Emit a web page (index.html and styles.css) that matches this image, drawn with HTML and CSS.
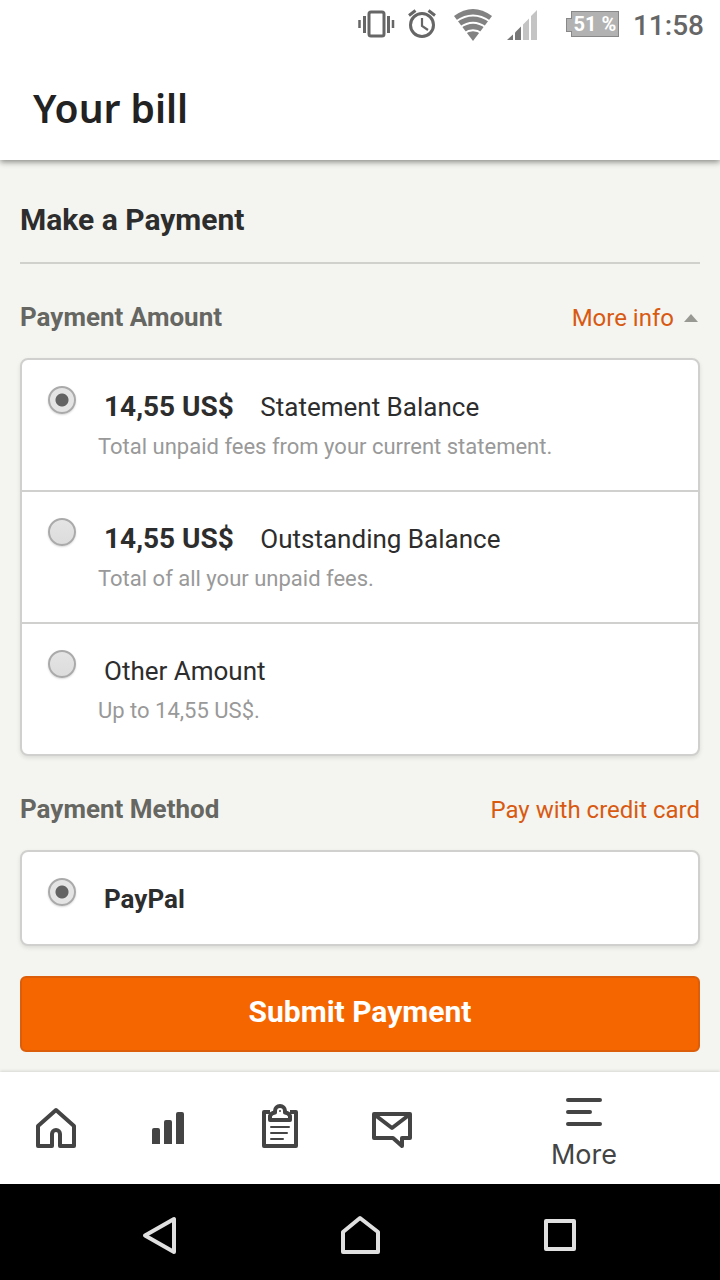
FILE: index.html
```
<!DOCTYPE html>
<html lang="en">

<head>
    <meta charset="UTF-8">
    <meta name="viewport" content="width=device-width, initial-scale=1.0">
    <title>Your bill</title>
    <link rel="stylesheet" href="styles.css">
</head>

<body>
    <div class="status-bar">
        <svg class="vibrate" width="38" height="30" viewBox="0 0 38 30" fill="none" stroke="#666">
            <rect x="11" y="3" width="15" height="24" rx="2" stroke-width="3" />
            <path d="M6.500 7v17M30.500 7v17" stroke-width="3" />
            <path d="M1.500 11v8M35 11v8" stroke-width="2.500" />
        </svg>
        <svg class="alarm" width="30" height="30" viewBox="0 0 30 30" fill="none" stroke="#666">
            <circle cx="14" cy="16" r="11.500" stroke-width="3" />
            <path d="M14 9v8l6 4" stroke-width="2.200" />
            <path d="M1 6.500l6.500-5M27 6.500l-6.500-5" stroke-width="3" />
        </svg>
        <svg class="wifi" width="40" height="34" viewBox="0 0 40 34">
            <path d="M0 9q19-14 38 0L19 34z" fill="#828282" />
            <path d="M2 14.500q17-12 34 0M6 20.500q13-9.500 26 0M10 26.500q9-6.500 18 0" fill="none" stroke="white" stroke-width="1.800" />
        </svg>
        <svg class="signal" width="30" height="30" viewBox="0 0 30 30">
            <path d="M0 30l6-5.500V30z" fill="#777" />
            <path d="M8 22.500l6-6V30H8z" fill="#777" />
            <path d="M16 14.500l6-6V30h-6zM24 6l6-6v30h-6z" fill="#c4c4c4" />
        </svg>
        <span class="battery">51 %</span>
        <span class="clock">11:58</span>
    </div>

    <header class="header">
        <h1>Your bill</h1>
    </header>

    <main class="content">
        <h2 class="page-title">Make a Payment</h2>

        <form class="payment-form">
            <div class="section-head">
                <h3>Payment Amount</h3>
                <a href="#info">More info
                    <svg width="18" height="10" viewBox="0 0 18 10">
                        <path d="M2 9l7-8 7 8z" fill="#999994" />
                    </svg>
                </a>
            </div>
            <div class="card">
                <label class="option">
                    <input type="radio" name="amount" checked>
                    <span class="option-text">
                        <span class="option-main"><b class="price">14,55 US$</b> Statement Balance</span>
                        <span class="option-note">Total unpaid fees from your current statement.</span>
                    </span>
                </label>
                <label class="option">
                    <input type="radio" name="amount">
                    <span class="option-text">
                        <span class="option-main"><b class="price">14,55 US$</b> Outstanding Balance</span>
                        <span class="option-note">Total of all your unpaid fees.</span>
                    </span>
                </label>
                <label class="option">
                    <input type="radio" name="amount">
                    <span class="option-text">
                        <span class="option-main">Other Amount</span>
                        <span class="option-note">Up to 14,55 US$.</span>
                    </span>
                </label>
            </div>

            <div class="section-head">
                <h3>Payment Method</h3>
                <a href="#card">Pay with credit card</a>
            </div>
            <div class="card">
                <label class="option">
                    <input type="radio" name="method" checked>
                    <span class="option-text">
                        <b class="option-main">PayPal</b>
                    </span>
                </label>
            </div>

            <button type="submit" class="submit-btn">Submit Payment</button>
        </form>
    </main>

    <nav class="tabs">
        <a href="#home" aria-label="Home">
            <svg width="40" height="41" viewBox="0 0 40 41" fill="none" stroke="#444" stroke-width="4" stroke-linejoin="round">
                <path d="M2 39V19L20 3l18 16v20H24V27a4 4 0 0 0-8 0v12z" />
            </svg>
        </a>
        <a href="#stats" aria-label="Stats">
            <svg width="32" height="36" viewBox="0 0 32 36" fill="#444">
                <path d="M0 32V18q0-2 2-2h4q2 0 2 2v14zM12 32V10q0-2 2-2h4q2 0 2 2v22zM24 32V2q0-2 2-2h4q2 0 2 2v30z" />
            </svg>
        </a>
        <a href="#orders" aria-label="Orders">
            <svg width="36" height="44" viewBox="0 0 36 44" fill="none" stroke="#444" stroke-linejoin="round">
                <path d="M8 8H2v34h32V8h-6" stroke-width="4" />
                <path d="M8 16v-4q1-3 5-3.500V7a5 5 0 0 1 10 0v1.500q4 .5 5 3.500v4z" stroke-width="4" />
                <circle cx="18" cy="7" r="1" fill="#444" stroke="none" />
                <path d="M9 23h18M9 29h16M9 35h12" stroke-width="2" stroke-linecap="round" />
            </svg>
        </a>
        <a href="#messages" aria-label="Messages">
            <svg width="40" height="36" viewBox="0 0 40 36" fill="none" stroke="#444" stroke-width="4" stroke-linejoin="round">
                <path d="M2 2h36v24h-8v8l-9-8H2z" />
                <path d="M3 3l17 13L37 3" />
            </svg>
        </a>
        <a href="#more" class="more">
            <svg width="36" height="28" viewBox="0 0 36 28" stroke="#444" stroke-width="4" stroke-linecap="round">
                <path d="M2 2h32M2 14h22M2 26h32" />
            </svg>
            More
        </a>
    </nav>

    <div class="system-nav">
        <button type="button" aria-label="Back">
            <svg width="38" height="40" viewBox="0 0 38 40">
                <path d="M4 20.500L33 4v33z" />
            </svg>
        </button>
        <button type="button" aria-label="Home screen">
            <svg width="40" height="40" viewBox="0 0 40 40">
                <path d="M3 37V17L20 3l18 14v20z" />
            </svg>
        </button>
        <button type="button" aria-label="Recent apps">
            <svg width="34" height="34" viewBox="0 0 34 34">
                <path d="M3 3h28v28H3z" />
            </svg>
        </button>
    </div>
</body>

</html>
```
FILE: styles.css
```
* {
    box-sizing: border-box;
}

body {
    display: flex;
    flex-direction: column;
    min-height: 100vh;
    margin: 0;
    background-color: #f4f5f0;
    color: #2d2d2d;
    font-family: Roboto, sans-serif;
}

h1,
h2,
h3 {
    margin: 0;
}

a {
    text-decoration: none;
}

svg {
    display: block;
    flex: none;
}

.status-bar {
    z-index: 2;
    display: flex;
    align-items: center;
    justify-content: flex-end;
    height: 48px;
    padding-right: 16px;
    background-color: white;
}

.alarm {
    margin-left: 12px;
}

.wifi {
    margin-left: 16px;
}

.signal {
    margin-left: 13px;
    margin-top: 2px;
}

.battery {
    position: relative;
    margin-left: 34px;
    width: 48px;
    border: 1px solid #888;
    background-color: #b2b2b2;
    color: white;
    font-size: 20px;
    font-weight: bold;
    line-height: 24px;
    text-align: center;
    white-space: nowrap;
}

.battery::before {
    content: "";
    position: absolute;
    left: -6px;
    top: 6px;
    width: 5px;
    height: 12px;
    border: 1px solid #888;
    border-right: none;
    background-color: #b2b2b2;
}

.clock {
    margin-left: 14px;
    padding-top: 4px;
    color: #666;
    font-size: 28px;
    font-weight: 500;
    line-height: 34px;
}

.header {
    z-index: 1;
    height: 112px;
    padding: 32px 33px;
    background-color: white;
    box-shadow: 0 2px 6px rgba(0, 0, 0, 0.45);
}

h1 {
    color: #222;
    font-family: "Noto Sans", sans-serif;
    font-size: 39px;
    font-weight: 600;
    line-height: 56px;
}

.content {
    flex: 1;
    padding: 0 20px 20px;
}

.page-title {
    padding: 40px 0 22px;
    border-bottom: 2px solid #d0d1cc;
    font-size: 30px;
    line-height: 40px;
}

.section-head {
    display: flex;
    align-items: center;
    justify-content: space-between;
    height: 94px;
    padding-top: 12px;
}

.section-head h3 {
    color: #666662;
    font-size: 26px;
}

.section-head a {
    display: flex;
    align-items: center;
    gap: 8px;
    padding-top: 2px;
    color: #d85a12;
    font-size: 24px;
}

.card {
    border: 2px solid #d0d1ce;
    border-radius: 8px;
    background-color: white;
    box-shadow: 0 2px 4px rgba(0, 0, 0, 0.1);
}

.option {
    display: flex;
    align-items: flex-start;
    gap: 22px;
    padding: 26px 26px 24px;
}

.option + .option {
    border-top: 2px solid #d0d1ce;
}

.option input {
    appearance: none;
    flex: none;
    width: 28px;
    height: 28px;
    margin: 0;
    border: 2px solid #aaa;
    border-radius: 50%;
    background: linear-gradient(#e4e4e4, #dcdcdc);
    box-shadow: 0 1px 2px rgba(0, 0, 0, 0.15);
}

.option input:checked {
    background: radial-gradient(circle, #636363 6px, #e4e4e4 7px);
}

.option-main {
    display: block;
    padding-left: 6px;
    font-size: 26px;
    line-height: 42px;
}

.price {
    margin-right: 20px;
    font-size: 28px;
}

.option-note {
    display: block;
    color: #999;
    font-size: 22px;
    line-height: 38px;
}

.submit-btn {
    display: block;
    width: 100%;
    height: 76px;
    margin-top: 30px;
    padding-bottom: 6px;
    border: 2px solid #dc5e0b;
    border-radius: 6px;
    background-color: #f56600;
    color: white;
    font-family: inherit;
    font-size: 30px;
    font-weight: bold;
    cursor: pointer;
}

.tabs {
    display: grid;
    grid-template-columns: repeat(4, 7fr) 17fr;
    height: 112px;
    background-color: white;
    box-shadow: 0 -1px 3px rgba(0, 0, 0, 0.12);
}

.tabs a {
    display: flex;
    align-items: flex-end;
    justify-content: center;
    padding-bottom: 36px;
}

.tabs .more {
    flex-direction: column;
    align-items: center;
    justify-content: flex-end;
    gap: 12px;
    padding-bottom: 12px;
    color: #444;
    font-family: Inter, sans-serif;
    font-size: 27px;
    line-height: 34px;
}

.system-nav {
    display: grid;
    grid-template-columns: repeat(3, 1fr);
    height: 96px;
    padding: 6px 60px 0;
    background-color: black;
}

.system-nav button {
    display: flex;
    align-items: center;
    justify-content: center;
    border: none;
    background: none;
    cursor: pointer;
}

.system-nav path {
    fill: none;
    stroke: #e0e0e0;
    stroke-width: 4;
    stroke-linejoin: round;
}
```
